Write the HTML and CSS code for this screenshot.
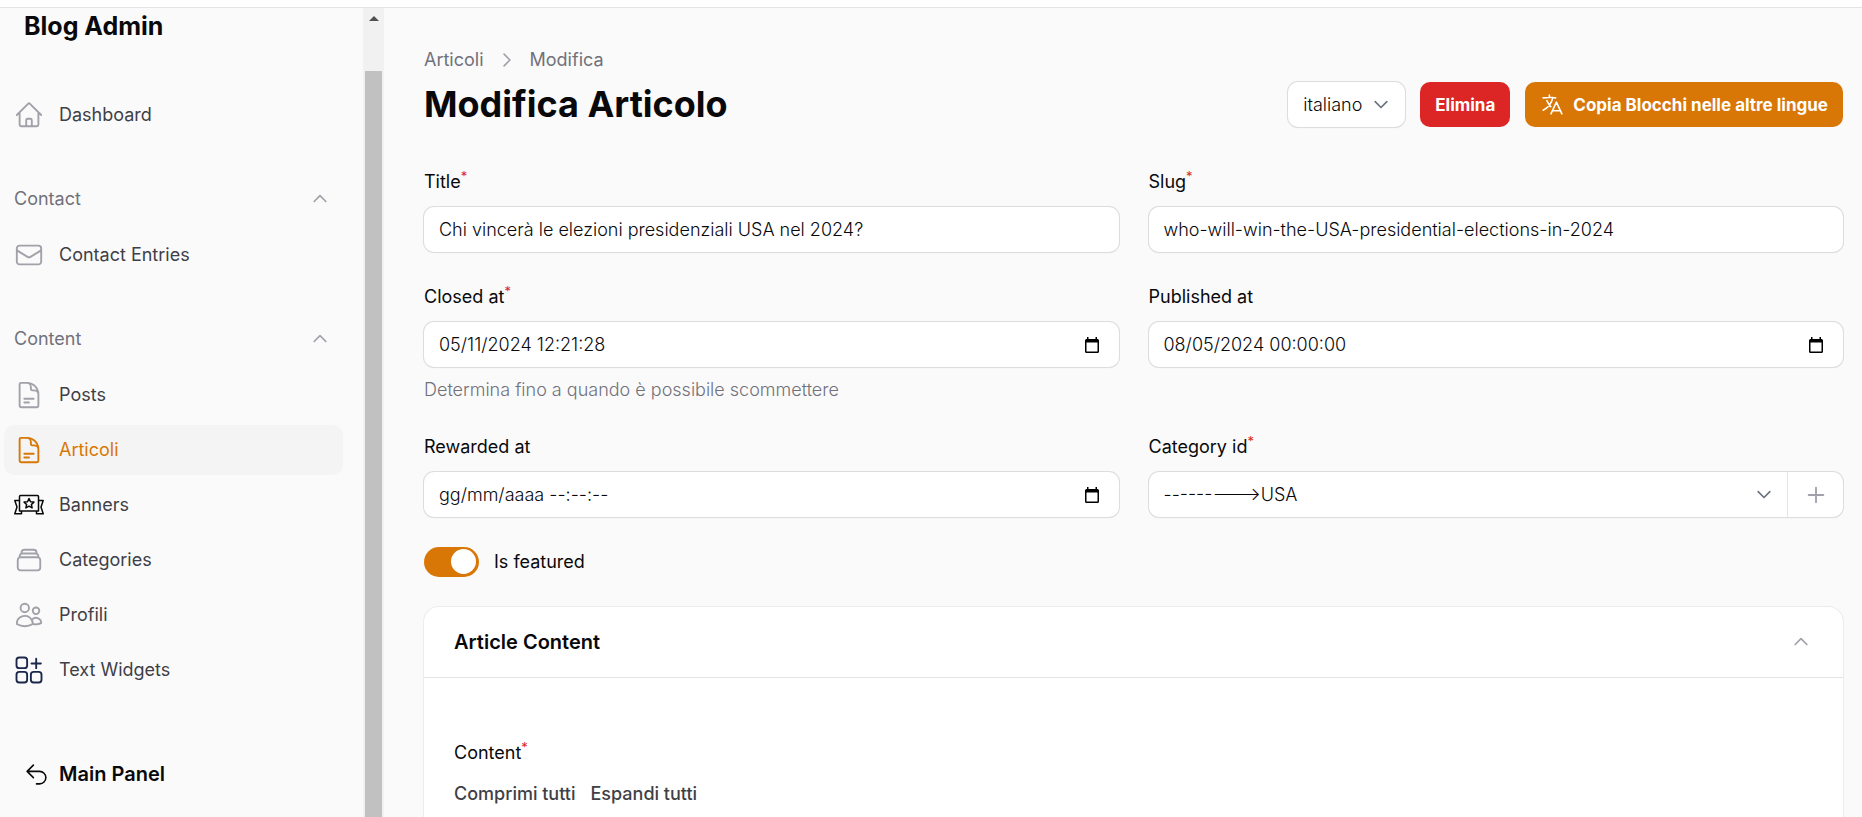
FILE: index.html
```html
<!DOCTYPE html>
<html lang="it">
<head>
<meta charset="utf-8">
<title>Modifica Articolo - Blog Admin</title>
<meta name="viewport" content="width=device-width, initial-scale=1">
<link rel="stylesheet" href="styles.css">
</head>
<body>
<svg class="sprite" aria-hidden="true">
  <symbol id="i-home" viewBox="0 0 24 24"><path d="m2.25 12 8.954-8.955c.44-.439 1.152-.439 1.591 0L21.75 12M4.5 9.75v10.125c0 .621.504 1.125 1.125 1.125H9.75v-4.875c0-.621.504-1.125 1.125-1.125h2.25c.621 0 1.125.504 1.125 1.125V21h4.125c.621 0 1.125-.504 1.125-1.125V9.75M8.25 21h8.25"/></symbol>
  <symbol id="i-mail" viewBox="0 0 24 24"><path d="M21.75 6.75v10.5a2.25 2.25 0 0 1-2.25 2.25h-15a2.25 2.25 0 0 1-2.25-2.25V6.75m19.5 0A2.25 2.25 0 0 0 19.5 4.5h-15a2.25 2.25 0 0 0-2.25 2.25m19.5 0v.243a2.25 2.25 0 0 1-1.07 1.916l-7.5 4.615a2.25 2.25 0 0 1-2.36 0L3.32 8.91a2.25 2.25 0 0 1-1.07-1.916V6.75"/></symbol>
  <symbol id="i-doc" viewBox="0 0 24 24"><path d="M19.5 14.25v-2.625a3.375 3.375 0 0 0-3.375-3.375h-1.5A1.125 1.125 0 0 1 13.5 7.125v-1.5a3.375 3.375 0 0 0-3.375-3.375H8.25m0 12.75h7.5m-7.5 3H12M10.5 2.25H5.625c-.621 0-1.125.504-1.125 1.125v17.25c0 .621.504 1.125 1.125 1.125h12.75c.621 0 1.125-.504 1.125-1.125V11.25a9 9 0 0 0-9-9Z"/></symbol>
  <symbol id="i-stack" viewBox="0 0 24 24"><path d="M6 6.878V6a2.25 2.25 0 0 1 2.25-2.25h7.5A2.25 2.25 0 0 1 18 6v.878m-12 0c.235-.083.487-.128.75-.128h10.5c.263 0 .515.045.75.128m-12 0A2.25 2.25 0 0 0 4.5 9v.878m13.5-3A2.25 2.25 0 0 1 19.5 9v.878m0 0a2.246 2.246 0 0 0-.75-.128H5.25c-.263 0-.515.045-.75.128m15 0A2.25 2.25 0 0 1 21 12v6a2.25 2.25 0 0 1-2.25 2.25H5.25A2.25 2.25 0 0 1 3 18v-6c0-.98.626-1.813 1.5-2.122"/></symbol>
  <symbol id="i-users" viewBox="0 0 24 24"><path d="M15 19.128a9.38 9.38 0 0 0 2.625.372 9.337 9.337 0 0 0 4.121-.952 4.125 4.125 0 0 0-7.533-2.493M15 19.128v-.003c0-1.113-.285-2.16-.786-3.07M15 19.128v.106A12.318 12.318 0 0 1 8.624 21c-2.331 0-4.512-.645-6.374-1.766l-.001-.109a6.375 6.375 0 0 1 11.964-3.07M12 6.375a3.375 3.375 0 1 1-6.75 0 3.375 3.375 0 0 1 6.75 0Zm8.25 2.25a2.625 2.625 0 1 1-5.25 0 2.625 2.625 0 0 1 5.25 0Z"/></symbol>
  <symbol id="i-banner" viewBox="0 0 30 30"><path d="M6.500 5.500h17a1 1 0 0 1 1 1V21h-19V6.500a1 1 0 0 1 1-1ZM5.500 10.500H.800l2.200 6.500-2.200 6.800h6.700V21M24.500 10.500h4.700L27 17l2.200 6.800h-6.700V21"/><path d="m15 8.500 1.500 3.200 3.400.400-2.500 2.400.700 3.400-3.100-1.700-3.100 1.700.700-3.400-2.500-2.400 3.400-.400Z"/></symbol>
  <symbol id="i-widgets" viewBox="0 0 24 24"><rect x="2" y="2" width="8.500" height="8.500" rx="2.200"/><rect x="2" y="13.500" width="8.500" height="8.500" rx="2.200"/><rect x="13.500" y="13.500" width="8.500" height="8.500" rx="2.200"/><path d="M17.750 3v7.500M14 6.750h7.500"/></symbol>
  <symbol id="i-back" viewBox="0 0 24 24"><path d="M9 15 3 9m0 0 6-6M3 9h12a6 6 0 0 1 0 12h-3"/></symbol>
  <symbol id="i-lang" viewBox="0 0 24 24"><path d="m10.500 21 5.250-11.250L21 21m-9-3h7.500M3 5.621a48.474 48.474 0 0 1 6-.371m0 0c1.120 0 2.233.038 3.334.114M9 5.250V3m3.334 2.364C11.176 10.658 7.690 15.080 3 17.502m9.334-12.138c.896.061 1.785.147 2.666.257m-4.589 8.495a18.023 18.023 0 0 1-3.827-5.802"/></symbol>
  <symbol id="i-up" viewBox="0 0 24 24"><path d="m5 15 7-7 7 7"/></symbol>
  <symbol id="i-down" viewBox="0 0 24 24"><path d="m5 8 7 7 7-7"/></symbol>
  <symbol id="i-right" viewBox="0 0 24 24"><path d="m8.500 5 7 7-7 7"/></symbol>
  <symbol id="i-plus" viewBox="0 0 24 24"><path d="M12 4v16M4 12h16"/></symbol>
  <symbol id="i-cal" viewBox="0 0 14 16"><path d="M0 3.500A1.500 1.500 0 0 1 1.500 2H2V0h1.500v2h7V0H12v2h.5A1.500 1.500 0 0 1 14 3.500v11a1.500 1.500 0 0 1-1.500 1.500h-11A1.500 1.500 0 0 1 0 14.500ZM1.500 5.500v9h11v-9Z"/></symbol>
</svg>

<header class="topbar"></header>
<div class="layout">
  <aside class="sidebar">
    <div class="sidebar-body">
      <a class="brand" href="#">Blog Admin</a>
      <nav class="nav">
        <ul class="nav-list">
          <li><a class="nav-item" href="#"><svg class="nav-icon"><use href="#i-home"/></svg>Dashboard</a></li>
        </ul>
        <section class="nav-group">
          <button class="nav-heading" type="button">Contact<svg class="chevron"><use href="#i-up"/></svg></button>
          <ul class="nav-list">
            <li><a class="nav-item" href="#"><svg class="nav-icon"><use href="#i-mail"/></svg>Contact Entries</a></li>
          </ul>
        </section>
        <section class="nav-group">
          <button class="nav-heading" type="button">Content<svg class="chevron"><use href="#i-up"/></svg></button>
          <ul class="nav-list">
            <li><a class="nav-item" href="#"><svg class="nav-icon"><use href="#i-doc"/></svg>Posts</a></li>
            <li><a class="nav-item active" href="#" aria-current="page"><svg class="nav-icon"><use href="#i-doc"/></svg>Articoli</a></li>
            <li><a class="nav-item" href="#"><svg class="nav-icon black"><use href="#i-banner"/></svg>Banners</a></li>
            <li><a class="nav-item" href="#"><svg class="nav-icon"><use href="#i-stack"/></svg>Categories</a></li>
            <li><a class="nav-item" href="#"><svg class="nav-icon"><use href="#i-users"/></svg>Profili</a></li>
            <li><a class="nav-item" href="#"><svg class="nav-icon navy"><use href="#i-widgets"/></svg>Text Widgets</a></li>
          </ul>
        </section>
      </nav>
      <a class="main-panel" href="#"><svg class="back-icon"><use href="#i-back"/></svg>Main Panel</a>
    </div>
    <div class="scrollbar" aria-hidden="true"><span class="scroll-arrow"></span><span class="scroll-thumb"></span></div>
  </aside>

  <main class="main">
    <nav class="breadcrumbs"><a href="#">Articoli</a><svg class="chevron"><use href="#i-right"/></svg><a href="#">Modifica</a></nav>
    <div class="page-head">
      <h1 class="title">Modifica Articolo</h1>
      <div class="actions">
        <div class="locale">
          <select class="locale-select" aria-label="Lingua"><option>italiano</option></select>
          <svg class="chevron slate"><use href="#i-down"/></svg>
        </div>
        <button class="btn danger" type="button">Elimina</button>
        <button class="btn primary" type="button"><svg class="btn-icon"><use href="#i-lang"/></svg>Copia Blocchi nelle altre lingue</button>
      </div>
    </div>

    <form class="form">
      <div class="field">
        <label class="label" for="title">Title<sup>*</sup></label>
        <div class="control"><input class="input" id="title" type="text" value="Chi vincerà le elezioni presidenziali USA nel 2024?"></div>
      </div>
      <div class="field">
        <label class="label" for="slug">Slug<sup>*</sup></label>
        <div class="control"><input class="input" id="slug" type="text" value="who-will-win-the-USA-presidential-elections-in-2024"></div>
      </div>
      <div class="field">
        <label class="label" for="closed">Closed at<sup>*</sup></label>
        <div class="control"><input class="input" id="closed" type="text" value="05/11/2024 12:21:28"><button class="cal" type="button" aria-label="Apri calendario"><svg class="cal-icon"><use href="#i-cal"/></svg></button></div>
        <p class="help">Determina fino a quando è possibile scommettere</p>
      </div>
      <div class="field">
        <label class="label" for="published">Published at</label>
        <div class="control"><input class="input" id="published" type="text" value="08/05/2024 00:00:00"><button class="cal" type="button" aria-label="Apri calendario"><svg class="cal-icon"><use href="#i-cal"/></svg></button></div>
      </div>
      <div class="field">
        <label class="label" for="rewarded">Rewarded at</label>
        <div class="control"><input class="input" id="rewarded" type="text" placeholder="gg/mm/aaaa --:--:--"><button class="cal" type="button" aria-label="Apri calendario"><svg class="cal-icon"><use href="#i-cal"/></svg></button></div>
      </div>
      <div class="field">
        <label class="label" for="category">Category id<sup>*</sup></label>
        <div class="control">
          <div class="select-wrap"><select class="input" id="category"><option>---------&gt;USA</option></select><svg class="chevron slate"><use href="#i-down"/></svg></div>
          <button class="add" type="button" aria-label="Aggiungi"><svg class="plus"><use href="#i-plus"/></svg></button>
        </div>
      </div>
      <label class="toggle-row"><input class="toggle" type="checkbox" role="switch" checked>Is featured</label>
    </form>

    <section class="card">
      <header class="card-head"><h2 class="card-title">Article Content</h2><button class="collapse" type="button" aria-label="Comprimi"><svg class="chevron"><use href="#i-up"/></svg></button></header>
      <div class="card-body">
        <div class="label">Content<sup>*</sup></div>
        <div class="links"><button class="link" type="button">Comprimi tutti</button><button class="link" type="button">Espandi tutti</button></div>
      </div>
    </section>
  </main>
</div>
</body>
</html>
```
FILE: styles.css
```css
*, *::before, *::after { box-sizing: border-box; }
body, h1, h2, p, ul { margin: 0; padding: 0; }
ul { list-style: none; }
a { color: inherit; text-decoration: none; }
button, input, select { font: inherit; color: inherit; margin: 0; padding: 0; border: 0; background: none; }
button { cursor: pointer; }

body {
  height: 100vh;
  display: flex;
  flex-direction: column;
  overflow: hidden;
  background: #fafafa;
  color: #09090b;
  font-family: Inter, "Liberation Sans", sans-serif;
  font-size: 18px;
  line-height: 30px;
}

svg { flex: none; fill: none; stroke: currentColor; stroke-width: 1.5; stroke-linecap: round; stroke-linejoin: round; }
.sprite { position: absolute; width: 0; height: 0; }
.chevron { width: 20px; height: 20px; stroke-width: 2; color: #a1a1aa; }
.slate { color: #6b7280; }

.topbar { flex: none; height: 8px; background: #fff; border-bottom: 1px solid #e4e4e5; }
.layout { flex: 1; min-height: 0; display: flex; }

.sidebar { flex: none; display: flex; width: 384px; }
.sidebar-body { flex: 1; overflow: hidden; padding-left: 4px; padding-right: 20px; }
.brand { display: block; padding: 3px 20px; font-size: 25px; font-weight: 700; }
.nav { display: flex; flex-direction: column; gap: 36px; padding-top: 46px; }
.nav-list { display: flex; flex-direction: column; gap: 5px; }
.nav-group { display: flex; flex-direction: column; gap: 9px; }
.nav-heading { display: flex; align-items: center; justify-content: space-between; height: 45px; padding: 0 13px 0 10px; color: #71717a; }
.nav-item { display: flex; align-items: center; gap: 15px; height: 50px; padding: 0 10px; border-radius: 10px; color: #3f3f46; }
.nav-icon { width: 30px; height: 30px; color: #a1a1aa; }
.active { background: #f4f4f5; color: #d97706; }
.active .nav-icon { color: #d97706; }
.nav-icon.black { color: #09090b; }
.nav-icon.navy { color: #1c274c; }
.main-panel { display: flex; align-items: center; gap: 10px; padding: 64px 20px 0; font-size: 20px; font-weight: 600; }
.back-icon { width: 25px; height: 25px; }

.scrollbar { flex: none; display: flex; flex-direction: column; align-items: center; gap: 50px; width: 21px; padding-top: 8px; background: #f1f1f1; }
.scroll-arrow { border: 5px solid transparent; border-top: 0; border-bottom-color: #505050; }
.scroll-thumb { flex: 1; width: 17px; background: #c1c1c1; }

.main { flex: 1; min-width: 0; display: flex; flex-direction: column; padding: 39px 19px 0 40px; }
.breadcrumbs { display: flex; align-items: center; gap: 13px; height: 25px; color: #71717a; }
.page-head { display: flex; align-items: center; justify-content: space-between; padding-top: 10px; }
.title { font-size: 36px; line-height: 45px; font-weight: 700; }
.actions { display: flex; gap: 15px; }
.btn { display: flex; align-items: center; gap: 8px; height: 45px; padding: 0 15px; border-radius: 10px; color: #fff; font-size: 17px; font-weight: 700; }
.btn-icon { width: 25px; height: 25px; }
.danger { background: #dc2626; }
.primary { background: #d97706; }
.locale, .control { display: flex; height: 45px; border-radius: 10px; background: #fff; box-shadow: 0 0 0 1px #dddddf, 0 1px 2px rgba(0, 0, 0, .05); }
.locale { align-items: center; padding-right: 14px; }
.locale-select { appearance: none; height: 45px; padding: 0 8px 0 15px; font-weight: 300; }

.form { display: grid; grid-template-columns: 1fr 1fr; gap: 30px; padding-top: 40px; }
.field { display: flex; flex-direction: column; min-width: 0; }
.label { margin-bottom: 10px; }
.label sup { font-size: 13px; line-height: 0; color: #dc2626; }
.input { appearance: none; flex: 1; min-width: 0; padding: 0 15px; outline: 0; font-weight: 300; }
.input::placeholder { color: #09090b; opacity: 1; }
.cal { display: grid; place-items: center; width: 54px; color: #000; }
.cal-icon { width: 14px; height: 16px; fill: currentColor; fill-rule: evenodd; stroke: none; }
.select-wrap { flex: 1; display: flex; align-items: center; padding-right: 13px; }
.add { display: grid; place-items: center; width: 56px; border-left: 1px solid #e4e4e7; color: #a1a1aa; }
.plus { width: 22px; height: 22px; stroke-width: 2; }
.help { padding-top: 11px; line-height: 24px; font-weight: 300; color: #71717a; }
.toggle-row { display: flex; align-items: center; gap: 15px; }
.toggle { appearance: none; display: flex; width: 55px; height: 30px; padding: 2px 3px; border-radius: 15px; background: #d97706; justify-content: flex-end; }
.toggle::before { content: ""; width: 25px; height: 25px; border-radius: 50%; background: #fff; }

.card { flex: 1; display: flex; flex-direction: column; margin-top: 30px; border-radius: 15px 15px 0 0; background: #fff; box-shadow: 0 0 0 1px #ececed; }
.card-head { display: flex; align-items: center; justify-content: space-between; padding: 20px 32px 20px 30px; border-bottom: 1px solid #e4e4e7; }
.card-title { font-size: 20px; font-weight: 600; }
.collapse { display: grid; }
.card-body { padding: 60px 30px 0; }
.links { display: flex; gap: 15px; padding-top: 1px; }
.link { font-weight: 500; color: #3f3f46; }
```
